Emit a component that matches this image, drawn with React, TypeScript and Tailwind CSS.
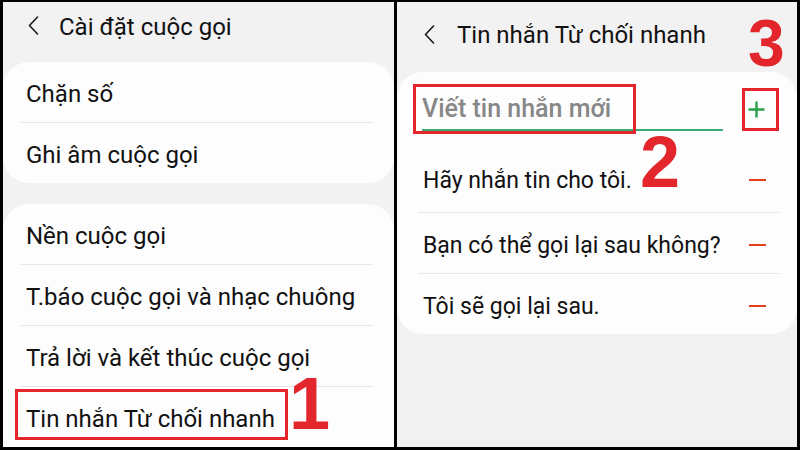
import React from 'react'

// Two phone screens side by side: call settings -> quick decline messages

const FONT = { fontFamily: 'Roboto, "Noto Sans", "Liberation Sans", sans-serif' }
const ANNOT = { fontFamily: '"Liberation Sans", Arial, sans-serif' }

function Chevron() {
  return (
    <svg width="11" height="19" viewBox="0 0 11 19" fill="none">
      <path d="M9.5 1 L1.5 9.5 L9.5 18" stroke="#1a1a1a" strokeWidth="1.6" strokeLinecap="round" strokeLinejoin="round" />
    </svg>
  )
}

function Divider() {
  return <div className="h-px bg-[#e6e6e6]" />
}

function SettingRow({ label }: { label: string }) {
  return (
    <div className="h-[60px] flex items-center pl-[6px] pt-[4px] text-[24px] leading-none text-[#111]">
      {label}
    </div>
  )
}

function MessageRow({ label, first }: { label: string; first?: boolean }) {
  return (
    <div
      className={`flex items-center justify-between pl-[5px] pr-[13px] text-[23px] leading-none text-[#111] ${
        first ? 'h-[64px]' : 'h-[60px] pt-[4px]'
      }`}
    >
      <span>{label}</span>
      <span className="block w-[17px] h-[2px] bg-[#e2401b]" />
    </div>
  )
}

function CallSettings() {
  return (
    <div className="relative w-[391px] h-full bg-[#f2f2f2] overflow-hidden flex flex-col">
      <div className="h-[60px] flex items-start pt-[13px] pl-[25px] gap-[20px] text-[24px] leading-none text-[#111]">
        <span className="mt-[1px]"><Chevron /></span>
        <span>Cài đặt cuộc gọi</span>
      </div>

      <div className="bg-[#fdfdfd] rounded-[26px] pl-[17px] pr-[21px]">
        <SettingRow label="Chặn số" />
        <Divider />
        <SettingRow label="Ghi âm cuộc gọi" />
      </div>

      <div className="mt-[21px] flex-1 bg-[#fdfdfd] rounded-t-[26px] pl-[17px] pr-[21px]">
        <SettingRow label="Nền cuộc gọi" />
        <Divider />
        <SettingRow label="T.báo cuộc gọi và nhạc chuông" />
        <Divider />
        <SettingRow label="Trả lời và kết thúc cuộc gọi" />
        <Divider />
        <SettingRow label="Tin nhắn Từ chối nhanh" />
      </div>

      {/* tutorial annotations */}
      <div className="absolute left-[12px] top-[387px] w-[273px] h-[51px] border-[3px] border-[#e3252c]" />
      <div style={ANNOT} className="absolute left-[286px] top-[365px] text-[74px] leading-none font-bold text-[#e3252c]">
        1
      </div>
    </div>
  )
}

function QuickDecline() {
  return (
    <div className="relative flex-1 h-full bg-[#f2f2f2] overflow-hidden flex flex-col">
      <div className="h-[70px] flex items-start pt-[21px] pl-[27px] gap-[22px] text-[24px] leading-none text-[#111]">
        <span className="mt-[2px]"><Chevron /></span>
        <span>Tin nhắn Từ chối nhanh</span>
      </div>

      <div className="bg-[#fdfdfd] rounded-[26px] pl-[21px] pr-[18px]">
        <div className="h-[76px] flex items-start">
          <div className="ml-[4px] mt-[24px] w-[301px] pb-[8px] border-b-2 border-[#3aab72]">
            <input
              readOnly
              placeholder="Viết tin nhắn mới"
              className="block w-full h-[25px] bg-transparent outline-none text-[25px] font-medium leading-none text-[#111] placeholder:text-[#878787]"
            />
          </div>
          <svg className="ml-[25px] mt-[29px]" width="17" height="17" viewBox="0 0 17 17">
            <path d="M8.5 0.5 V16.5 M0.5 8.5 H16.5" stroke="#27a047" strokeWidth="2.4" />
          </svg>
        </div>
        <MessageRow label="Hãy nhắn tin cho tôi." first />
        <Divider />
        <MessageRow label="Bạn có thể gọi lại sau không?" />
        <Divider />
        <MessageRow label="Tôi sẽ gọi lại sau." />
      </div>

      {/* tutorial annotations */}
      <div className="absolute left-[16px] top-[82px] w-[223px] h-[50px] border-[3px] border-[#e3252c]" />
      <div className="absolute left-[345px] top-[86px] w-[37px] h-[43px] border-[3px] border-[#e3252c]" />
      <div style={ANNOT} className="absolute left-[243px] top-[124px] text-[72px] leading-none font-bold text-[#e3252c]">
        2
      </div>
      <div style={ANNOT} className="absolute left-[351px] top-[8px] text-[66px] leading-none font-bold text-[#e3252c]">
        3
      </div>
    </div>
  )
}

export default function App() {
  return (
    <div style={FONT} className="w-[800px] h-[450px] bg-black pt-[2px] pl-[3px] pr-[3px] pb-[3px] flex gap-[3px] overflow-hidden">
      <CallSettings />
      <QuickDecline />
    </div>
  )
}
